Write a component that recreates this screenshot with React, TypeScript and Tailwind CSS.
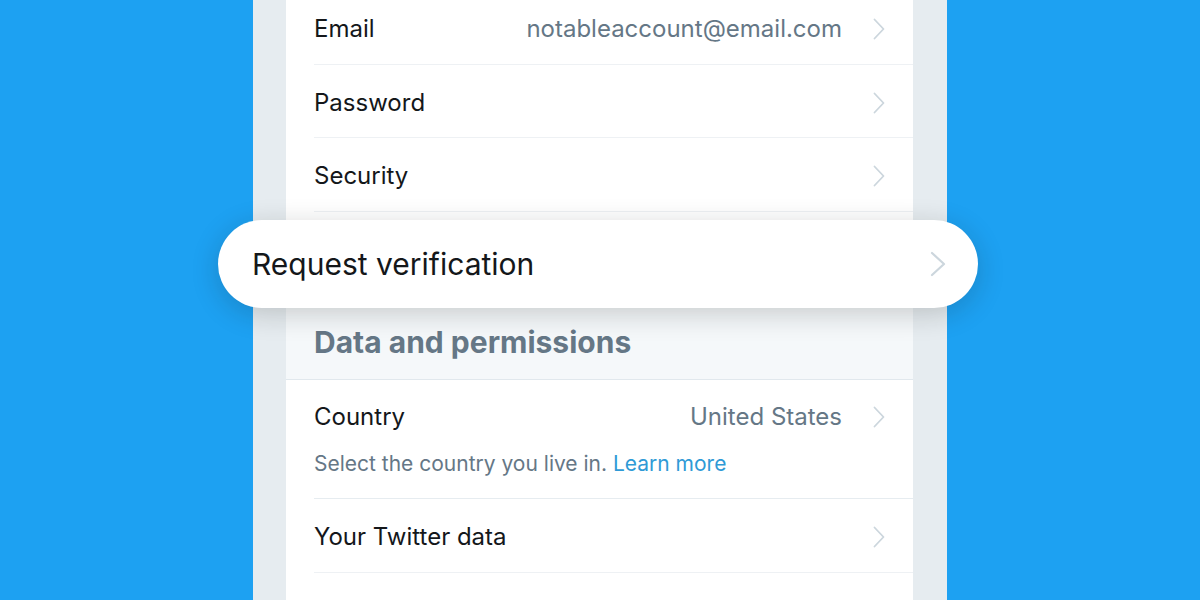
import React from "react";

const Chevron: React.FC<{ big?: boolean }> = ({ big }) =>
  big ? (
    <svg width="16" height="26" viewBox="0 0 16 26" fill="none">
      <polyline points="2,2 14,13 2,24" stroke="#ccd6dd" strokeWidth="2.2" strokeLinecap="round" strokeLinejoin="round" />
    </svg>
  ) : (
    <svg width="12" height="22" viewBox="0 0 12 22" fill="none">
      <polyline points="1.5,1.5 10.5,11 1.5,20.5" stroke="#ccd6dd" strokeWidth="1.8" strokeLinecap="round" strokeLinejoin="round" />
    </svg>
  );

const Row: React.FC<{ label?: string; value?: string; last?: boolean; tall?: boolean }> = ({ label, value, last, tall }) => (
  <div className={`ml-[28px] ${last ? "" : "border-b border-[#eef1f4]"}`}>
    <div className={`${tall ? "h-[73px]" : "h-[72.5px]"} flex items-center justify-between pr-[28px] pt-[4px]`}>
      <span className="text-[24px] text-[#14171a]">{label}</span>
      <div className="flex items-center gap-[31px]">
        {value && <span className="text-[24px] text-[#657786]">{value}</span>}
        <Chevron />
      </div>
    </div>
  </div>
);

export default function App() {
  return (
    <div
      className="relative w-[1200px] h-[600px] overflow-hidden bg-[#1da1f2] flex justify-center"
      style={{ fontFamily: "Inter, 'Noto Sans', 'Liberation Sans', sans-serif" }}
    >
      <div className="w-[694px] h-full bg-[#e6ecf0] pl-[33px] pr-[34px]">
        <div className="bg-white h-[640px] mt-[-9px]">
          <Row label="Email" value="notableaccount@email.com" />
          <Row label="Password" />
          <Row label="Security" />
          <div className="h-[88px] bg-white" />
          <div className="h-[80px] bg-[#f5f8fa] border-b border-[#e1e8ed] pl-[28px] pt-[24px]">
            <span className="text-[30px] leading-[36px] font-bold text-[#657786]">Data and permissions</span>
          </div>
          <div className="ml-[28px] border-b border-[#e6ecf0] pt-[22px] pb-[21px] pr-[28px]">
            <div className="h-[30px] flex items-center justify-between">
              <span className="text-[24px] text-[#14171a]">Country</span>
              <div className="flex items-center gap-[31px]">
                <span className="text-[24px] text-[#657786]">United States</span>
                <Chevron />
              </div>
            </div>
            <div className="mt-[19px] text-[21px] leading-[26px] text-[#657786]">
              Select the country you live in. <span className="text-[#2f9ad6]">Learn more</span>
            </div>
          </div>
          <Row label="Your Twitter data" tall />
          <Row last />
        </div>
      </div>

      <div className="absolute left-[218px] top-[220px] w-[760px] h-[88px] rounded-full bg-white shadow-[0_6px_28px_rgba(20,23,26,0.2)] flex items-center justify-between pl-[34px] pr-[32px]">
        <span className="text-[30px] text-[#14171a]">Request verification</span>
        <Chevron big />
      </div>
    </div>
  );
}
